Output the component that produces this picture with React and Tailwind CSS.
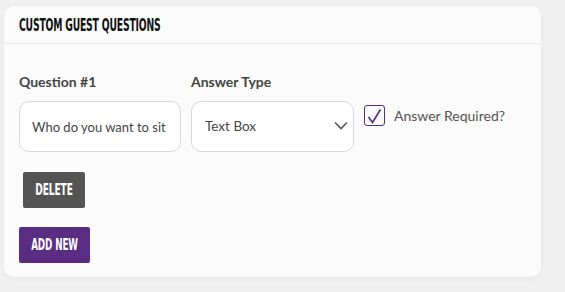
import { useState } from "react";

export default function App() {
  const [question, setQuestion] = useState("Who do you want to sit with?");
  const [type, setType] = useState("Text Box");
  const [required, setRequired] = useState(true);

  return (
    <div className="w-[565px] h-[292px] bg-[#f0f0f0] pt-[6px] pl-[4px] font-['Lato',sans-serif]">
      <div className="w-[537px] h-[271px] bg-[#fbfbfb] rounded-[10px] shadow-[0_1px_6px_rgba(0,0,0,0.04)]">
        <div className="h-[38px] border-b border-[#e9e9e9] px-[15px] flex items-center">
          <h2 className="font-['DejaVu_Sans',sans-serif] font-stretch-condensed font-bold text-[18px] tracking-[-0.3px] text-[#111] uppercase leading-none inline-block scale-x-[0.57] origin-left whitespace-nowrap">
            Custom Guest Questions
          </h2>
        </div>

        <div className="px-[15px] pt-[28px]">
          <div className="flex items-start gap-[10px]">
            <div>
              <label className="block text-[14px] font-bold text-[#444] mb-[9px] leading-[20px]">
                Question #1
              </label>
              <input
                className="w-[162px] h-[51px] rounded-[10px] border border-[#d5d7de] bg-white px-[12px] text-[13px] text-[#444] outline-none"
                type="text"
                value={question}
                onChange={(e) => setQuestion(e.target.value)}
              />
            </div>

            <div>
              <label className="block text-[14px] font-bold text-[#444] mb-[9px] leading-[20px]">
                Answer Type
              </label>
              <div className="relative">
                <select
                  className="appearance-none w-[163px] h-[51px] rounded-[10px] border border-[#d5d7de] bg-white pl-[13px] text-[13.5px] text-[#444] outline-none"
                  value={type}
                  onChange={(e) => setType(e.target.value)}
                >
                  <option>Text Box</option>
                  <option>Multiple Choice</option>
                </select>
                <svg
                  className="absolute right-[6px] top-[20px] pointer-events-none"
                  width="14"
                  height="9"
                  viewBox="0 0 14 9"
                  fill="none"
                >
                  <path d="M1 1.5l6 6 6-6" stroke="#555" strokeWidth="1.6" />
                </svg>
              </div>
            </div>

            <label className="flex items-center gap-[9px] mt-[33px] cursor-pointer">
              <span
                onClick={() => setRequired(!required)}
                className="w-[21px] h-[21px] rounded-[3px] border border-[#5a2d82] flex items-center justify-center"
              >
                {required && (
                  <svg width="15" height="16" viewBox="0 0 15 16" fill="none">
                    <path d="M1.5 9l4 5.5L13.5 1.5" stroke="#5a2d82" strokeWidth="1.6" />
                  </svg>
                )}
              </span>
              <span className="text-[14px] text-[#555]">Answer Required?</span>
            </label>
          </div>

          <button className="mt-[20px] ml-[4px] w-[62px] h-[36px] bg-[#545454] text-white rounded-[2px] flex items-center justify-center">
            <span className="font-['DejaVu_Sans',sans-serif] font-bold text-[16px] tracking-[-0.2px] uppercase inline-block scale-x-[0.57] whitespace-nowrap">
              Delete
            </span>
          </button>
          <button className="mt-[19px] w-[71px] h-[36px] bg-[#5a2d82] text-white rounded-[2px] flex items-center justify-center">
            <span className="font-['DejaVu_Sans',sans-serif] font-bold text-[16px] tracking-[-0.2px] uppercase inline-block scale-x-[0.55] whitespace-nowrap">
              Add New
            </span>
          </button>
        </div>
      </div>
    </div>
  );
}
